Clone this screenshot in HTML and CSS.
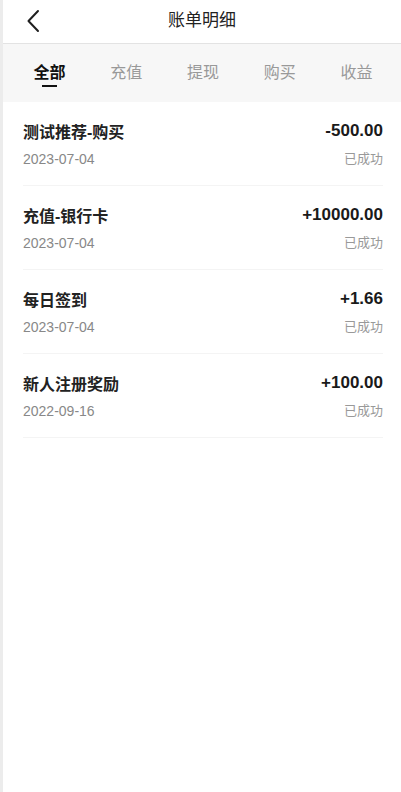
FILE: index.html
```html
<!DOCTYPE html>
<html lang="zh-CN">
<head>
<meta charset="utf-8">
<title>账单明细</title>
<link rel="stylesheet" href="styles.css">
</head>
<body>
<div class="page">
  <header class="header">
    <span class="back">
      <svg width="14" height="24" viewBox="0 0 14 24"><path d="M11 2 L1.5 12 L11 22" fill="none" stroke="#1f1f1f" stroke-width="2" stroke-linecap="round" stroke-linejoin="round"/></svg>
    </span>
    <h1 class="title">账单明细</h1>
  </header>
  <nav class="tabs">
    <div class="tab active"><span class="label">全部</span></div>
    <div class="tab"><span class="label">充值</span></div>
    <div class="tab"><span class="label">提现</span></div>
    <div class="tab"><span class="label">购买</span></div>
    <div class="tab"><span class="label">收益</span></div>
  </nav>
  <ul class="list">
    <li class="item">
      <div class="row"><span class="name">测试推荐-购买</span><span class="amount">-500.00</span></div>
      <div class="row sub"><span class="date">2023-07-04</span><span class="status">已成功</span></div>
    </li>
    <li class="item">
      <div class="row"><span class="name">充值-银行卡</span><span class="amount">+10000.00</span></div>
      <div class="row sub"><span class="date">2023-07-04</span><span class="status">已成功</span></div>
    </li>
    <li class="item">
      <div class="row"><span class="name">每日签到</span><span class="amount">+1.66</span></div>
      <div class="row sub"><span class="date">2023-07-04</span><span class="status">已成功</span></div>
    </li>
    <li class="item">
      <div class="row"><span class="name">新人注册奖励</span><span class="amount">+100.00</span></div>
      <div class="row sub"><span class="date">2022-09-16</span><span class="status">已成功</span></div>
    </li>
  </ul>
</div>
</body>
</html>
```

FILE: styles.css
```css
html, body {
  margin: 0;
  padding: 0;
  background: #fff;
}
body {
  font-family: "Liberation Sans", "Noto Sans CJK SC", sans-serif;
  color: #222;
}
.page {
  min-height: 792px;
  border-left: 3px solid #ececec;
  box-sizing: border-box;
  display: flex;
  flex-direction: column;
}
.header {
  height: 43px;
  border-bottom: 1px solid #e3e3e3;
  display: flex;
  align-items: center;
  justify-content: center;
  position: relative;
}
.back {
  position: absolute;
  left: 24px;
  top: 9px;
  width: 14px;
  height: 24px;
  display: flex;
}
.title {
  margin: 0;
  font-size: 17px;
  font-weight: normal;
  color: #222;
  line-height: 24px;
  margin-top: -2px;
}
.tabs {
  height: 58px;
  background: #f7f7f7;
  display: grid;
  grid-template-columns: repeat(5, 1fr);
  padding: 0 6px 0 8px;
  align-items: center;
}
.tab {
  text-align: center;
  font-size: 16px;
  line-height: 22px;
  color: #999;
}
.label {
  position: relative;
  display: inline-block;
}
.tab.active {
  color: #111;
  font-weight: bold;
}
.tab.active .label::after {
  content: "";
  position: absolute;
  left: 50%;
  bottom: -3px;
  width: 15px;
  height: 2px;
  margin-left: -7px;
  background: #111;
}
.list {
  list-style: none;
  margin: 0;
  padding: 0 18px 0 20px;
}
.item {
  padding: 18px 0 17px;
  border-bottom: 1px solid #f4f4f4;
  display: flex;
  flex-direction: column;
  gap: 6px;
}
.row {
  display: flex;
  justify-content: space-between;
  align-items: center;
  height: 22px;
}
.row.sub {
  height: 20px;
}
.name {
  font-size: 16px;
  font-weight: bold;
  color: #222;
}
.amount {
  font-size: 17px;
  font-weight: bold;
  color: #1a1a1a;
}
.date {
  font-size: 14px;
  color: #888;
  margin-top: 2px;
}
.status {
  font-size: 13px;
  color: #999;
  margin-top: -1px;
}
```
